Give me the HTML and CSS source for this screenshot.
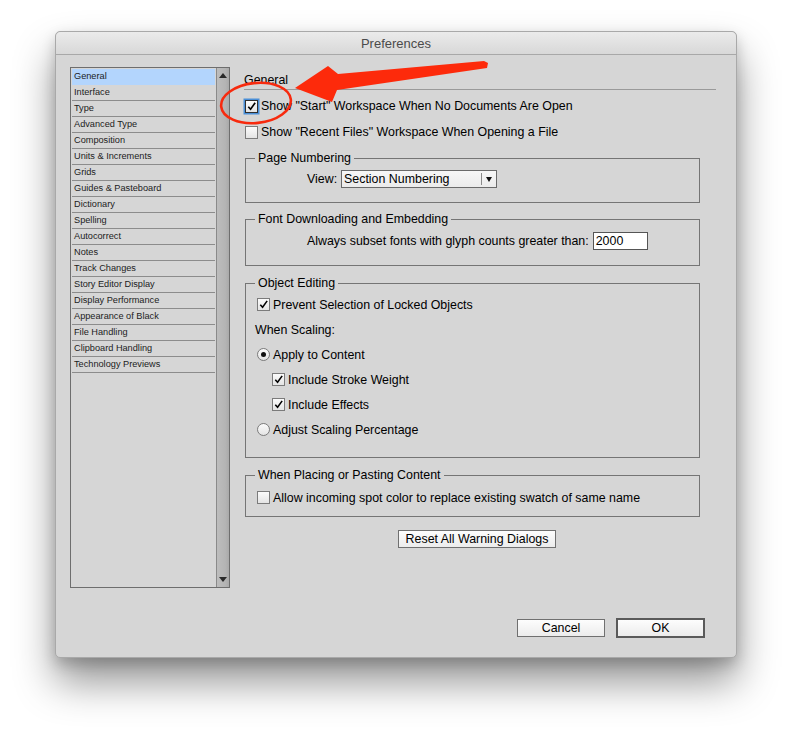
FILE: index.html
```html
<!DOCTYPE html>
<html>
<head>
<meta charset="utf-8">
<link rel="stylesheet" href="styles.css">
</head>
<body>
<div class="window">
  <div class="titlebar">Preferences</div>
  <div class="main">
    <div class="sidebar">
      <ul class="list">
        <li class="sel">General</li>
        <li>Interface</li>
        <li>Type</li>
        <li>Advanced Type</li>
        <li>Composition</li>
        <li>Units &amp; Increments</li>
        <li>Grids</li>
        <li>Guides &amp; Pasteboard</li>
        <li>Dictionary</li>
        <li>Spelling</li>
        <li>Autocorrect</li>
        <li>Notes</li>
        <li>Track Changes</li>
        <li>Story Editor Display</li>
        <li>Display Performance</li>
        <li>Appearance of Black</li>
        <li>File Handling</li>
        <li>Clipboard Handling</li>
        <li>Technology Previews</li>
      </ul>
      <div class="scrollbar">
        <span class="arrow up"></span>
        <span class="arrow down"></span>
      </div>
    </div>
    <div class="panel">
      <div class="heading">General</div>
      <label class="row first-check"><span class="cb checked focus"><svg viewBox="0 0 12 12"><path d="M2.5 6.2 L5 9 L10 2" fill="none" stroke="#000" stroke-width="1.8"/></svg></span>Show "Start" Workspace When No Documents Are Open</label>
      <label class="row second-check"><span class="cb"></span>Show "Recent Files" Workspace When Opening a File</label>

      <fieldset class="group g-page">
        <legend>Page Numbering</legend>
        <div class="view-row">
          <span>View:</span>
          <div class="select"><span class="sel-text">Section Numbering</span><span class="sel-btn"></span></div>
        </div>
      </fieldset>

      <fieldset class="group g-font">
        <legend>Font Downloading and Embedding</legend>
        <div class="font-row">
          <span>Always subset fonts with glyph counts greater than:</span>
          <span class="input">2000</span>
        </div>
      </fieldset>

      <fieldset class="group g-obj">
        <legend>Object Editing</legend>
        <label class="orow"><span class="cb checked"><svg viewBox="0 0 12 12"><path d="M2.5 6.2 L5 9 L10 2" fill="none" stroke="#000" stroke-width="1.7"/></svg></span>Prevent Selection of Locked Objects</label>
        <div class="orow plain">When Scaling:</div>
        <label class="orow"><span class="radio on"></span>Apply to Content</label>
        <label class="orow indent"><span class="cb checked"><svg viewBox="0 0 12 12"><path d="M2.5 6.2 L5 9 L10 2" fill="none" stroke="#000" stroke-width="1.7"/></svg></span>Include Stroke Weight</label>
        <label class="orow indent"><span class="cb checked"><svg viewBox="0 0 12 12"><path d="M2.5 6.2 L5 9 L10 2" fill="none" stroke="#000" stroke-width="1.7"/></svg></span>Include Effects</label>
        <label class="orow"><span class="radio"></span>Adjust Scaling Percentage</label>
      </fieldset>

      <fieldset class="group g-place">
        <legend>When Placing or Pasting Content</legend>
        <label class="prow"><span class="cb"></span>Allow incoming spot color to replace existing swatch of same name</label>
      </fieldset>

      <div class="reset-row"><span class="btn reset">Reset All Warning Dialogs</span></div>
    </div>
  </div>
  <div class="footer">
    <span class="btn cancel">Cancel</span>
    <span class="btn ok">OK</span>
  </div>
</div>

<svg class="annot" width="792" height="738" viewBox="0 0 792 738">
  <ellipse cx="256" cy="103" rx="35" ry="20" transform="rotate(-6 256 103)" fill="none" stroke="#f72a0e" stroke-width="2.6"/>
  <polygon points="295,88 328,66 338,74 484,61 488,63 487,68 337,90 332,102" fill="#fd2a0b"/>
</svg>
</body>
</html>
```

FILE: styles.css
```css
html, body {
  margin: 0;
  padding: 0;
  background: #ffffff;
}
body {
  width: 792px;
  height: 738px;
  position: relative;
  overflow: hidden;
  font-family: "Liberation Sans", Arial, sans-serif;
  color: #000;
}
.window {
  box-sizing: border-box;
  margin: 31px 0 0 55px;
  width: 682px;
  height: 627px;
  background: #d6d6d6;
  border: 1px solid #a9a9a9;
  border-radius: 5px;
  box-shadow: 0 24px 40px rgba(0,0,0,0.42), 0 6px 14px rgba(0,0,0,0.18);
  display: flex;
  flex-direction: column;
}
.titlebar {
  box-sizing: border-box;
  height: 23px;
  border-bottom: 1px solid #a8a8a8;
  background: linear-gradient(#ebebeb, #d8d8d8);
  border-radius: 5px 5px 0 0;
  text-align: center;
  font-size: 13px;
  line-height: 24px;
  color: #4b4b4b;
}
.main {
  display: flex;
  padding: 12px 0 0 14px;
}
.sidebar {
  box-sizing: border-box;
  width: 160px;
  height: 521px;
  border: 1px solid #6e6e6e;
  display: flex;
  background: #d6d6d6;
}
.list {
  list-style: none;
  margin: 0;
  padding: 1px 1px 0 1px;
  flex: 1;
}
.list li {
  box-sizing: border-box;
  height: 16px;
  border-bottom: 1px solid #8c8c8c;
  font-size: 9.2px;
  line-height: 15px;
  padding-left: 2px;
  color: #1c1c1c;
}
.list li.sel {
  background: #b3d5fd;
  border-bottom-color: #b3d5fd;
}
.scrollbar {
  width: 12px;
  border-left: 1px solid #8a8a8a;
  background: linear-gradient(90deg, #bdbdbd, #b4b4b4 70%, #a9a9a9);
  display: flex;
  flex-direction: column;
  justify-content: space-between;
  align-items: center;
  padding: 5px 0 5px;
}
.arrow {
  width: 0;
  height: 0;
  border-left: 4px solid transparent;
  border-right: 4px solid transparent;
}
.arrow.up { border-bottom: 5px solid #2a2a2a; }
.arrow.down { border-top: 5px solid #2a2a2a; }

.panel {
  margin-left: 14px;
  width: 472px;
  font-size: 12.4px;
  display: flex;
  flex-direction: column;
}
.heading {
  padding-top: 6px;
  padding-bottom: 2px;
  line-height: 14px;
  border-bottom: 1px solid #9a9a9a;
}
.row {
  display: flex;
  align-items: center;
  height: 13px;
  line-height: 13px;
}
.first-check { margin-top: 10px; padding-left: 1px; }
.second-check { margin-top: 13px; padding-left: 1px; }
.cb {
  box-sizing: border-box;
  width: 13px;
  height: 13px;
  border: 1px solid #7b7b7b;
  background: linear-gradient(#fbfbfb, #e4e4e4);
  margin-right: 3px;
  display: inline-flex;
  flex: none;
}
.cb svg { width: 11px; height: 11px; }
.cb.focus {
  border: 1px solid #2f2f2f;
  box-shadow: 0 0 0 1.5px #4a8fd8;
}
.radio {
  box-sizing: border-box;
  width: 13px;
  height: 13px;
  border-radius: 50%;
  border: 1px solid #7b7b7b;
  background: linear-gradient(#fbfbfb, #e4e4e4);
  margin-right: 3px;
  flex: none;
  display: inline-flex;
  align-items: center;
  justify-content: center;
}
.radio.on::after {
  content: "";
  width: 5px;
  height: 5px;
  border-radius: 50%;
  background: #111;
}
.group {
  box-sizing: border-box;
  width: 455px;
  margin: 0 0 0 1px;
  padding: 0;
  border: 1px solid #757575;
  min-width: 0;
}
.group legend {
  margin-left: 9px;
  padding: 0 3px;
  line-height: 14px;
  font-size: 12.4px;
}
.g-page { margin-top: 12px; padding: 5px 0 14px 0; }
.g-font { margin-top: 9px; padding: 6px 0 15px 0; }
.g-obj { margin-top: 10px; padding: 2px 0 15px 0; }
.g-place { margin-top: 10px; padding: 9px 0 12px 0; }
.view-row, .font-row {
  display: flex;
  align-items: center;
  gap: 4px;
  height: 18px;
  padding-left: 61px;
}
.select {
  box-sizing: border-box;
  width: 156px;
  height: 18px;
  border: 1px solid #6a6a6a;
  background: linear-gradient(#f7f7f7, #ebebeb);
  display: flex;
  align-items: center;
}
.sel-text { flex: 1; padding-left: 2px; line-height: 16px; }
.sel-btn {
  width: 14px;
  height: 12px;
  border-left: 1px solid #8a8a8a;
  position: relative;
}
.sel-btn::after {
  content: "";
  position: absolute;
  left: 4px;
  top: 4px;
  border-left: 3.5px solid transparent;
  border-right: 3.5px solid transparent;
  border-top: 5px solid #111;
}
.input {
  box-sizing: border-box;
  width: 55px;
  height: 18px;
  border: 1px solid #555;
  background: #fff;
  line-height: 16px;
  padding-left: 2px;
}
.orow {
  display: flex;
  align-items: center;
  height: 25px;
  padding-left: 11px;
}
.orow.plain { padding-left: 9px; }
.orow.indent { padding-left: 26px; }
.prow {
  display: flex;
  align-items: center;
  height: 13px;
  padding-left: 11px;
}
.reset-row {
  margin-top: 13px;
  padding-left: 154px;
  display: flex;
}
.btn {
  box-sizing: border-box;
  height: 18px;
  border: 1px solid #707070;
  background: linear-gradient(#fdfdfd, #ececec);
  font-size: 12.4px;
  line-height: 16px;
  text-align: center;
  display: inline-block;
}
.reset { width: 158px; }
.footer {
  margin-top: 30px;
  display: flex;
  justify-content: flex-end;
  align-items: center;
  gap: 11px;
  padding-right: 31px;
  height: 20px;
}
.cancel { width: 88px; }
.ok {
  width: 89px;
  height: 20px;
  border: 2px solid #5a5a5a;
}
.annot {
  position: absolute;
  left: 0;
  top: 0;
  pointer-events: none;
}
```
